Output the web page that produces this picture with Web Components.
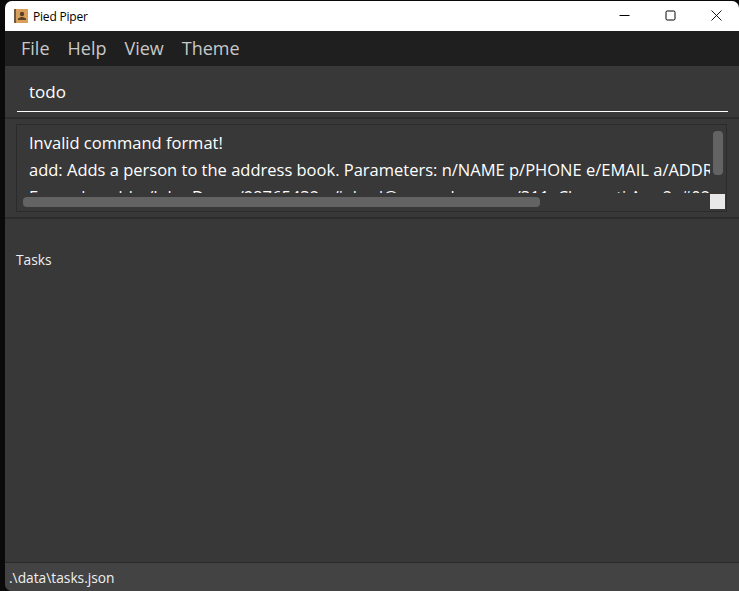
<!DOCTYPE html>
<html>
<head>
<meta charset="utf-8">
<title>Pied Piper</title>
<style>
  html, body { margin: 0; height: 100%; background: #000; overflow: hidden; }
  body { font-family: "Open Sans", "Noto Sans", sans-serif; }
</style>
</head>
<body>
<pp-window>
  <pp-titlebar slot="title" label="Pied Piper"></pp-titlebar>
  <pp-menubar items="File,Help,View,Theme"></pp-menubar>
  <pp-command value="todo"></pp-command>
  <pp-result>
    <div>Invalid command format!</div>
    <div>add: Adds a person to the address book. Parameters: n/NAME p/PHONE e/EMAIL a/ADDRESS [t/TAG]...</div>
    <div>Example: add n/John Doe p/98765432 e/johnd@example.com a/311, Clementi Ave 2, #02-25 t/friends t/owesMoney</div>
  </pp-result>
  <pp-tasks label="Tasks"></pp-tasks>
  <pp-status path=".\data\tasks.json"></pp-status>
</pp-window>
<script>
class PPWindow extends HTMLElement {
  constructor() {
    super();
    this.attachShadow({ mode: "open" }).innerHTML = `<style>
      :host { display: flex; flex-direction: column; box-sizing: border-box; width: 739px; height: 591px; padding: 1px 0 0 5px; background: #0a0a0a; }
      .frame { display: flex; flex-direction: column; flex: 1; min-height: 0; background: #383838; border-radius: 7px 7px 0 7px; overflow: hidden; }
      ::slotted(pp-tasks) { flex: 1; }
    </style><div class="frame"><slot name="title"></slot><slot></slot></div>`;
  }
}
class PPTitlebar extends HTMLElement {
  connectedCallback() {
    this.attachShadow({ mode: "open" }).innerHTML = `<style>
      :host { display: flex; align-items: center; height: 30px; background: #fff; color: #000; font: 12px "Open Sans", sans-serif; }
      .icon { margin-left: 9px; width: 14px; height: 14px; }
      .label { margin-left: 5px; flex: 1; letter-spacing: -.2px; }
      .btn { width: 46px; height: 29px; padding-bottom: 1px; display: flex; align-items: center; justify-content: center; }
      .btn.min { width: 45px; }
    </style>
    <svg class="icon" viewBox="0 0 14 14">
      <rect width="14" height="14" fill="#d9a05b"/><rect width="2" height="14" fill="#6d5a45"/>
      <circle cx="8" cy="5" r="2.2" fill="#5b4126"/><path d="M4 11h8V9.500L9 8H7L4 9.500z" fill="#5b4126"/>
    </svg>
    <span class="label">${this.getAttribute("label")}</span>
    <span class="btn min"><svg width="11" height="11" viewBox="0 0 11 11"><path d="M0.500 5.500h10" stroke="#000" fill="none"/></svg></span>
    <span class="btn"><svg width="11" height="11" viewBox="0 0 11 11"><rect x="1" y="1" width="9" height="9" rx="1.200" stroke="#000" fill="none"/></svg></span>
    <span class="btn"><svg width="11" height="11" viewBox="0 0 11 11"><path d="M.5.5l10 10M10.500.5l-10 10" stroke="#000" stroke-width=".9" fill="none"/></svg></span>`;
  }
}
class PPMenubar extends HTMLElement {
  connectedCallback() {
    const items = this.getAttribute("items").split(",").map(s => `<span>${s}</span>`).join("");
    this.attachShadow({ mode: "open" }).innerHTML = `<style>
      :host { display: flex; align-items: center; gap: 18px; box-sizing: border-box; height: 35px; padding: 0 0 2px 16px; background: #1f1f1f; color: #c8c8c8; font-size: 18px; }
    </style>${items}`;
  }
}
class PPCommand extends HTMLElement {
  connectedCallback() {
    this.attachShadow({ mode: "open" }).innerHTML = `<style>
      :host { display: block; box-sizing: border-box; height: 53px; padding: 0 11px 0 12px; border-bottom: 2px solid #2c2c2c; }
      .field { box-sizing: border-box; height: 46px; padding: 5px 0 0 12px; display: flex; align-items: center; color: #fff; font-size: 17px; border-bottom: 1px solid #fff; }
    </style><div class="field">${this.getAttribute("value")}</div>`;
  }
}
class PPResult extends HTMLElement {
  constructor() {
    super();
    this.attachShadow({ mode: "open" }).innerHTML = `<style>
      :host { display: block; box-sizing: border-box; height: 100px; padding: 5px 12px 5px 11px; border-bottom: 2px solid #2c2c2c; }
      .box { position: relative; box-sizing: border-box; height: 88px; border: 1px solid #2b2b2b; overflow: hidden; }
      .text { padding: 4px 0 0 12px; width: 693px; height: 68px; box-sizing: border-box; overflow: hidden; white-space: nowrap; color: #fff; font-size: 16.500px; line-height: 27px; }
      .vbar { position: absolute; left: 696px; top: 6px; width: 10px; height: 44px; background: #636363; border-radius: 4px; }
      .hbar { position: absolute; left: 6px; top: 72px; width: 517px; height: 10px; background: #636363; border-radius: 4px; }
      .corner { position: absolute; left: 693px; top: 69px; width: 15px; height: 15px; background: #e8e8e8; }
    </style><div class="box"><div class="text"><slot></slot></div><i class="vbar"></i><i class="hbar"></i><i class="corner"></i></div>`;
  }
}
class PPTasks extends HTMLElement {
  connectedCallback() {
    this.attachShadow({ mode: "open" }).innerHTML = `<style>
      :host { display: block; padding: 31px 0 0 11px; color: #f0f0f0; font-size: 13.750px; line-height: 20px; }
    </style>${this.getAttribute("label")}`;
  }
}
class PPStatus extends HTMLElement {
  connectedCallback() {
    this.attachShadow({ mode: "open" }).innerHTML = `<style>
      :host { display: flex; align-items: center; box-sizing: border-box; height: 29px; padding-left: 4px; background: #434343; border-top: 1px solid #2a2a2a; color: #f0f0f0; font-size: 13.750px; }
    </style>${this.getAttribute("path")}`;
  }
}
customElements.define("pp-window", PPWindow);
customElements.define("pp-titlebar", PPTitlebar);
customElements.define("pp-menubar", PPMenubar);
customElements.define("pp-command", PPCommand);
customElements.define("pp-result", PPResult);
customElements.define("pp-tasks", PPTasks);
customElements.define("pp-status", PPStatus);
</script>
</body>
</html>
